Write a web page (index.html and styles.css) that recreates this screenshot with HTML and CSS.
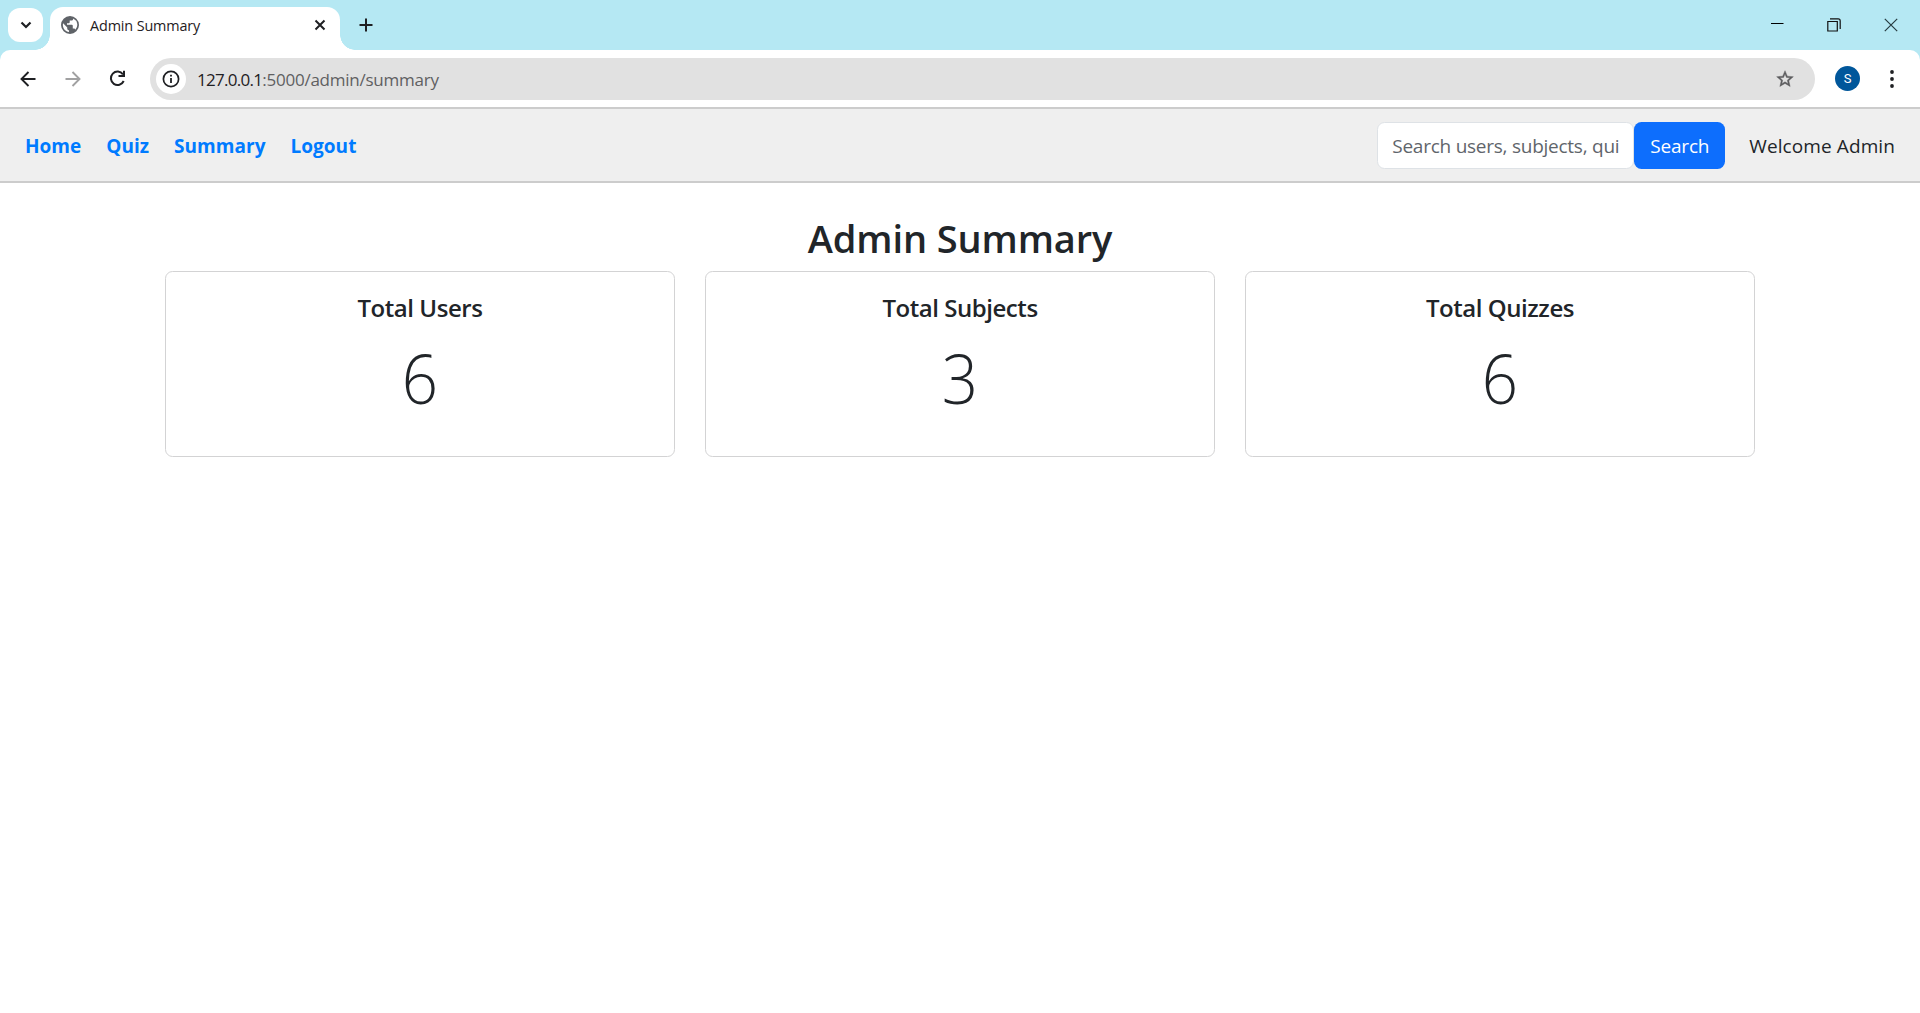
FILE: index.html
```html
<!DOCTYPE html>
<html lang="en">
<head>
<meta charset="utf-8">
<title>Admin Summary</title>
<link rel="stylesheet" href="styles.css">
</head>
<body>
<header class="browser">
  <div class="tabstrip">
    <button class="tab-search" aria-label="Search tabs"><svg width="12" height="12" viewBox="0 0 12 12"><path d="M1.5 3.5 6 8l4.5-4.5" fill="none" stroke="#1f2023" stroke-width="2.2"/></svg></button>
    <div class="tab">
      <svg class="globe" width="18" height="18" viewBox="0 0 24 24"><path fill="#5f6368" d="M12 0a12 12 0 1 0 0 24 12 12 0 0 0 0-24ZM2.500 12c0-.8.1-1.500.3-2.200L8.300 15.300v1.200c0 1.300 1.100 2.400 2.400 2.400v2.500C6.100 20.800 2.500 16.800 2.500 12Zm16.700 6.200c-.3-1-1.200-1.700-2.300-1.700h-1.200v-3.500c0-.7-.5-1.200-1.200-1.200H8V9.500h2.400c.7 0 1.200-.5 1.200-1.200V6H14c1.300 0 2.300-1 2.300-2.400V3.200A9.500 9.500 0 0 1 19.200 18.200Z"/></svg>
      <span class="tab-title">Admin Summary</span>
      <svg width="12" height="12" viewBox="0 0 12 12"><path d="m1.5 1.5 9 9m0-9-9 9" stroke="#1f2023" stroke-width="2"/></svg>
    </div>
    <svg class="new-tab" width="14" height="14" viewBox="0 0 14 14"><path d="M7 .5v13M.5 7h13" stroke="#1f2023" stroke-width="2"/></svg>
    <div class="window-controls">
      <svg width="14" height="14" viewBox="0 0 14 14"><path d="M1 5.5h12.500" stroke="#000"/></svg>
      <svg width="14" height="14" viewBox="0 0 14 14"><path d="M.8 3.5h9.500v9.500H.8zM3 .9h8.200q2 0 2 2V11" fill="none" stroke="#111" stroke-width="1.2"/></svg>
      <svg width="14" height="14" viewBox="0 0 14 14"><path d="m.8.8 12.4 12.4m0-12.4L.8 13.2" stroke="#263b40" stroke-width="1.2"/></svg>
    </div>
  </div>
  <div class="toolbar">
    <svg class="back" width="16" height="16" viewBox="0 0 16 16"><path d="M15.5 8H2M8.500 1 1.500 8l7 7" fill="none" stroke="#1f2023" stroke-width="1.9"/></svg>
    <svg class="forward" width="16" height="16" viewBox="0 0 16 16"><path d="M.5 8H14M7.500 1l7 7-7 7" fill="none" stroke="#a1a1a2" stroke-width="1.9"/></svg>
    <svg class="reload" width="17" height="17" viewBox="0 0 17 17"><path d="M14.7 11A6.700 6.700 0 1 1 14 4.300" fill="none" stroke="#1f2023" stroke-width="2"/><path d="M9.500 7h6.500V.8h-2v4.300H9.500z" fill="#1f2023"/></svg>
    <div class="omnibox">
      <span class="site-info"><svg width="18" height="18" viewBox="0 0 18 18"><circle cx="9" cy="9" r="7.6" fill="none" stroke="#1f2023" stroke-width="1.7"/><path d="M9 8v5M9 4.800v1.800" stroke="#1f2023" stroke-width="1.8"/></svg></span>
      <span class="url"><span class="host">127.0.0.1</span>:5000/admin/summary</span>
      <svg class="star" width="20" height="20" viewBox="0 0 24 24"><path fill="#5c5c5e" stroke="#5c5c5e" stroke-width=".5" d="m22 9.240-7.190-.62L12 2 9.190 8.630 2 9.240l5.460 4.730L5.820 21 12 17.270 18.180 21l-1.630-7.030L22 9.240zM12 15.400l-3.760 2.270 1-4.280-3.320-2.880 4.380-.38L12 6.100l1.710 4.040 4.380.38-3.320 2.880 1 4.280L12 15.400z"/></svg>
    </div>
    <span class="avatar">S</span>
    <svg class="menu" width="4" height="18" viewBox="0 0 4 18"><g fill="#1f2023"><circle cx="2" cy="2" r="1.9"/><circle cx="2" cy="9" r="1.9"/><circle cx="2" cy="16" r="1.9"/></g></svg>
  </div>
</header>
<nav class="navbar">
  <div class="links"><a>Home</a><a>Quiz</a><a>Summary</a><a>Logout</a></div>
  <div class="search"><input class="field" type="text" placeholder="Search users, subjects, quizzes"><button class="search-button">Search</button></div>
  <span class="welcome">Welcome Admin</span>
</nav>
<main class="content">
  <h1>Admin Summary</h1>
  <div class="cards">
    <section class="card"><h2>Total Users</h2><p>6</p></section>
    <section class="card"><h2>Total Subjects</h2><p>3</p></section>
    <section class="card"><h2>Total Quizzes</h2><p>6</p></section>
  </div>
</main>
</body>
</html>
```
FILE: styles.css
```css
* { box-sizing: border-box; }
body { margin: 0; background: #fff; color: #212529; font-family: "Open Sans", "Noto Sans", sans-serif; font-size: 19px; }
svg { display: block; flex: none; }
button { border: 0; padding: 0; font: inherit; }

/* Browser frame */
.browser { background: #b5e8f3; }
.tabstrip { height: 50px; display: flex; align-items: center; padding-left: 8px; }
.tab-search { width: 35px; height: 34px; border-radius: 12px; background: #fff; display: grid; place-items: center; }
.tab { position: relative; align-self: flex-end; width: 290px; height: 43px; margin-left: 7px; padding: 0 14px 7px 11px; background: #fff; border-radius: 13px 13px 0 0; display: flex; align-items: center; font-size: 14.4px; letter-spacing: -.13px; color: #1f2023; }
.tab::before, .tab::after { content: ""; position: absolute; bottom: 0; width: 15px; height: 15px; }
.tab::before { left: -15px; background: radial-gradient(circle at 0 0, transparent 14.5px, #fff 15px); }
.tab::after { right: -15px; background: radial-gradient(circle at 100% 0, transparent 14.5px, #fff 15px); }
.tab-title { margin: 0 auto 0 11px; white-space: nowrap; }
.new-tab { margin-left: 19px; }
.window-controls { margin-left: auto; display: flex; gap: 43px; padding-right: 22px; }
.toolbar { height: 57px; background: #fff; border-radius: 10px 10px 0 0; display: flex; align-items: center; padding: 0 26px 0 20px; }
.forward { margin-left: 29px; }
.reload { margin-left: 28px; }
.omnibox { width: 1665px; height: 42px; margin-left: 24px; padding: 0 20px 0 6px; border-radius: 21px; background: #e1e1e1; display: flex; align-items: center; }
.site-info { width: 30px; height: 30px; border-radius: 50%; background: #fff; display: grid; place-items: center; }
.url { margin-left: 11px; padding-top: 1px; font-size: 17px; letter-spacing: -.24px; color: #5f5f61; }
.host { color: #1f2023; letter-spacing: -.72px; }
.star { margin-left: auto; }
.avatar { width: 25px; height: 25px; margin-left: 20px; border-radius: 50%; background: #00579b; color: #fff; display: grid; place-items: center; font: 13px Roboto, sans-serif; }
.menu { margin-left: auto; }

/* Site navigation */
.navbar { height: 76px; border: solid #ccc; border-width: 2px 0; background: #efefef; display: flex; align-items: center; padding: 0 25px; }
.links { display: flex; gap: 25px; padding-top: 2px; font-weight: 700; letter-spacing: .03px; color: #007bff; }
.search { margin-left: auto; display: flex; }
.field { width: 257px; height: 47px; border: 1px solid #dee2e6; border-radius: 7.5px; background: #fff; padding: 2px 14px 0; font: 19px "Open Sans", sans-serif; letter-spacing: -.25px; }
.field::placeholder { color: #5f656b; opacity: 1; }
.search-button { width: 91px; height: 47px; padding-top: 2px; border-radius: 7.5px; background: #0d6efd; color: #fff; letter-spacing: -.2px; }
.welcome { margin-left: 24px; padding-top: 2px; letter-spacing: .1px; }

/* Summary */
.content { width: 1650px; margin: 0 auto; padding: 31px 30px 0; text-align: center; }
h1 { margin: 0 0 9px; font-size: 38px; line-height: 48px; font-weight: 600; letter-spacing: -.1px; }
.cards { display: grid; grid-template-columns: repeat(3, 510px); gap: 30px; }
.card { height: 186px; border: 1px solid #d3d3d4; border-radius: 7.5px; padding-top: 21px; }
h2 { margin: 0 0 10px; font-size: 24px; line-height: 30px; font-weight: 600; letter-spacing: -.45px; }
.card p { margin: 0; padding-top: 2px; font-size: 69px; line-height: 84px; font-weight: 300; transform: scaleX(.92); }
```
